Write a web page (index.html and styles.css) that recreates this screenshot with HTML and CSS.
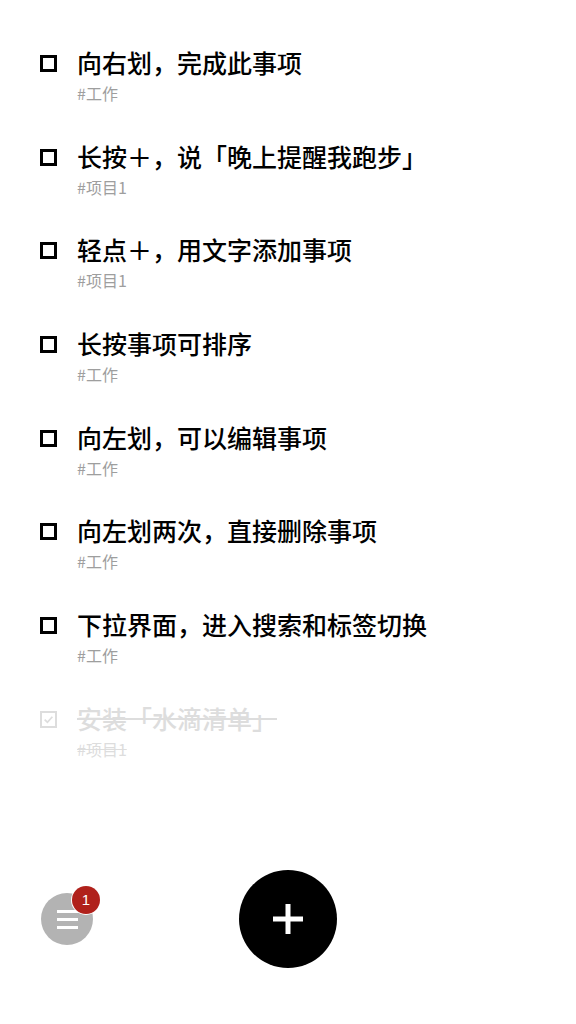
FILE: index.html
```html
<!DOCTYPE html>
<html lang="zh-CN">
<head>
  <meta charset="UTF-8" />
  <meta name="viewport" content="width=device-width, initial-scale=1.0"/>
  <title>水滴清单</title>
  <link rel="stylesheet" href="styles.css">
</head>
<body>
  <ul class="todo-list">
    <li class="todo">
      <span class="check"></span>
      <div class="todo-body">
        <div class="todo-title">向右划，完成此事项</div>
        <div class="todo-tag">#工作</div>
      </div>
    </li>
    <li class="todo">
      <span class="check"></span>
      <div class="todo-body">
        <div class="todo-title">长按＋，说「晚上提醒我跑步」</div>
        <div class="todo-tag">#项目1</div>
      </div>
    </li>
    <li class="todo">
      <span class="check"></span>
      <div class="todo-body">
        <div class="todo-title">轻点＋，用文字添加事项</div>
        <div class="todo-tag">#项目1</div>
      </div>
    </li>
    <li class="todo">
      <span class="check"></span>
      <div class="todo-body">
        <div class="todo-title">长按事项可排序</div>
        <div class="todo-tag">#工作</div>
      </div>
    </li>
    <li class="todo">
      <span class="check"></span>
      <div class="todo-body">
        <div class="todo-title">向左划，可以编辑事项</div>
        <div class="todo-tag">#工作</div>
      </div>
    </li>
    <li class="todo">
      <span class="check"></span>
      <div class="todo-body">
        <div class="todo-title">向左划两次，直接删除事项</div>
        <div class="todo-tag">#工作</div>
      </div>
    </li>
    <li class="todo">
      <span class="check"></span>
      <div class="todo-body">
        <div class="todo-title">下拉界面，进入搜索和标签切换</div>
        <div class="todo-tag">#工作</div>
      </div>
    </li>
    <li class="todo done">
      <span class="check">
        <svg viewBox="0 0 10 10" width="11" height="11"><path d="M1.5 5.2 L4 7.5 L8.5 2.5" fill="none" stroke="#ddd" stroke-width="1.6"/></svg>
      </span>
      <div class="todo-body">
        <div class="todo-title">安装「水滴清单」</div>
        <div class="todo-tag">#项目1</div>
      </div>
    </li>
  </ul>

  <div class="bottom-bar">
    <button class="menu-btn">
      <span class="line"></span>
      <span class="line"></span>
      <span class="line"></span>
      <span class="badge">1</span>
    </button>
    <button class="add-btn">
      <svg viewBox="0 0 32 32" width="32" height="32"><path d="M16 1 V31 M1 16 H31" stroke="#fff" stroke-width="5"/></svg>
    </button>
  </div>
</body>
</html>
```

FILE: styles.css
```css
body {
  margin: 0;
  padding: 0;
  background-color: #fff;
  font-family: "Noto Sans CJK SC", "Noto Sans", sans-serif;
  width: 576px;
  height: 1024px;
  position: relative;
  overflow: hidden;
}

.todo-list {
  list-style: none;
  margin: 0;
  padding: 46px 0 0 40px;
  display: flex;
  flex-direction: column;
  gap: 36.7px;
}

.todo {
  display: flex;
  align-items: flex-start;
}

.check {
  flex: none;
  box-sizing: border-box;
  width: 17px;
  height: 17px;
  border: 3px solid #000;
  margin-top: 9px;
  margin-right: 20px;
  display: flex;
  align-items: center;
  justify-content: center;
}

.todo-title {
  font-size: 25px;
  line-height: 33px;
  font-weight: 500;
  color: #000;
}

.todo-tag {
  font-size: 16px;
  line-height: 20px;
  margin-top: 4px;
  color: #9e9e9e;
}

.done .check {
  border: 2px solid #ddd;
}

.done .todo-title,
.done .todo-tag {
  color: #ddd;
  text-decoration: line-through;
}

.bottom-bar {
  position: absolute;
  left: 0;
  right: 0;
  top: 870px;
  height: 98px;
}

button {
  border: none;
  padding: 0;
  cursor: pointer;
}

.menu-btn {
  position: absolute;
  left: 41px;
  top: 23px;
  width: 52px;
  height: 52px;
  border-radius: 50%;
  background-color: #b3b3b3;
  display: flex;
  flex-direction: column;
  align-items: center;
  justify-content: center;
  gap: 5px;
}

.menu-btn .line {
  display: block;
  width: 21px;
  height: 3px;
  background-color: #fff;
}

.badge {
  position: absolute;
  left: 31px;
  top: -7px;
  width: 28px;
  height: 28px;
  border-radius: 50%;
  background-color: #b0211b;
  color: #fff;
  font-family: "Liberation Sans", sans-serif;
  font-size: 15px;
  line-height: 28px;
  text-align: center;
  box-shadow: 0 0 0 1px #fff;
}

.add-btn {
  position: absolute;
  left: 239px;
  top: 0;
  width: 98px;
  height: 98px;
  border-radius: 50%;
  background-color: #000;
  display: flex;
  align-items: center;
  justify-content: center;
}
```
